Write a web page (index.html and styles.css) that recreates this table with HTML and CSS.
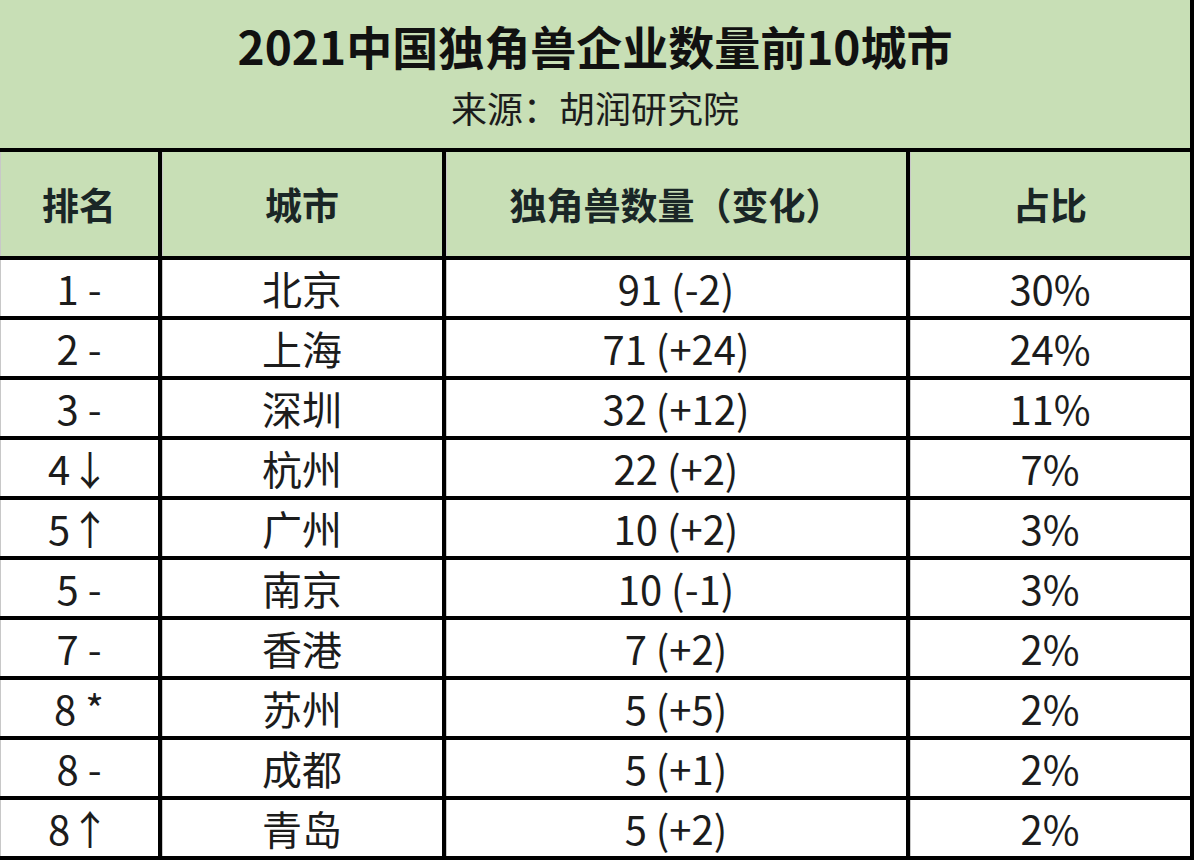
FILE: index.html
```html
<!DOCTYPE html>
<html lang="zh">
<head>
<meta charset="utf-8">
<link rel="stylesheet" href="styles.css">
</head>
<body>
<div class="sheet">
  <div class="title-cell">
    <div class="title">2021中国独角兽企业数量前10城市</div>
    <div class="subtitle">来源：胡润研究院</div>
  </div>
  <div class="cell head">排名</div>
  <div class="cell head">城市</div>
  <div class="cell head">独角兽数量（变化）</div>
  <div class="cell head">占比</div>

  <div class="cell">1 -</div><div class="cell">北京</div><div class="cell">91 (-2)</div><div class="cell">30%</div>
  <div class="cell">2 -</div><div class="cell">上海</div><div class="cell">71 (+24)</div><div class="cell">24%</div>
  <div class="cell">3 -</div><div class="cell">深圳</div><div class="cell">32 (+12)</div><div class="cell">11%</div>
  <div class="cell">4↓</div><div class="cell">杭州</div><div class="cell">22 (+2)</div><div class="cell">7%</div>
  <div class="cell">5↑</div><div class="cell">广州</div><div class="cell">10 (+2)</div><div class="cell">3%</div>
  <div class="cell">5 -</div><div class="cell">南京</div><div class="cell">10 (-1)</div><div class="cell">3%</div>
  <div class="cell">7 -</div><div class="cell">香港</div><div class="cell">7 (+2)</div><div class="cell">2%</div>
  <div class="cell">8 *</div><div class="cell">苏州</div><div class="cell">5 (+5)</div><div class="cell">2%</div>
  <div class="cell">8 -</div><div class="cell">成都</div><div class="cell">5 (+1)</div><div class="cell">2%</div>
  <div class="cell">8↑</div><div class="cell">青岛</div><div class="cell">5 (+2)</div><div class="cell">2%</div>
</div>
</body>
</html>
```

FILE: styles.css
```css
html, body {
  margin: 0;
  padding: 0;
  background: #ffffff;
}
.sheet {
  width: 1194px;
  height: 860px;
  box-sizing: border-box;
  display: grid;
  grid-template-columns: 158px 280px 460px 280px;
  grid-template-rows: 148px 104px repeat(10, 56px);
  gap: 4px;
  padding: 0 4px 4px 0;
  background: #000;
  font-family: "Noto Sans CJK SC", "Noto Sans", sans-serif;
  color: #1c1c1c;
}
.title-cell {
  grid-column: 1 / 5;
  background: #c8dfb6;
  display: flex;
  flex-direction: column;
  align-items: center;
  padding-top: 16px;
  box-sizing: border-box;
}
.title {
  font-size: 46px;
  font-weight: 700;
  line-height: 58px;
  color: #111;
}
.subtitle {
  font-size: 36px;
  line-height: 46px;
  margin-top: 10px;
  color: #1c1c1c;
}
.cell {
  background: #fff;
  display: flex;
  align-items: center;
  justify-content: center;
  font-size: 40px;
  line-height: 1;
  box-shadow: inset 1px 0 0 #c8c8c8;
}
.head {
  background: #c8dfb6;
  font-weight: 700;
  font-size: 37px;
  color: #1a2626;
}
```
